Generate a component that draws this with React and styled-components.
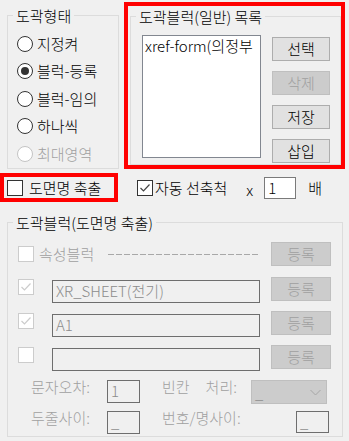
import React from "react";
import styled, { createGlobalStyle } from "styled-components";

const GlobalStyle = createGlobalStyle`
  html, body { margin: 0; padding: 0; background: #f0f0f0; }
  body {
    font-family: "Noto Sans CJK KR", "Noto Sans", sans-serif;
    font-size: 15px;
    font-weight: 300;
    color: #000;
  }
  * { box-sizing: border-box; }
`;

const Page = styled.div`
  width: 349px;
  height: 441px;
  overflow: hidden;
  display: flex;
  flex-direction: column;
`;

const TopRow = styled.div`
  display: flex;
  align-items: flex-start;
  padding-top: 2px;
`;

const Group = styled.div`
  display: flex;
  flex-direction: column;
  border: 1px solid #dcdcdc;
  flex: none;
`;

const ShapeGroup = styled(Group)`
  margin: 13px 0 0 7px;
  width: 112px;
  height: 154px;
`;

const ListGroup = styled(Group)`
  margin: 10px 0 0 2px;
  width: 211px;
  height: 149px;
`;

const BlockGroup = styled(Group)`
  margin: 20px 0 0 7px;
  width: 336px;
  height: 215px;
`;

const Title = styled.div`
  align-self: flex-start;
  margin: -9px 0 0 5px;
  padding: 0 3px;
  height: 18px;
  line-height: 18px;
  background: #f0f0f0;
  white-space: nowrap;
`;

const RadioList = styled.div`
  display: flex;
  flex-direction: column;
  padding: 5px 0 0 9px;
`;

const RadioRow = styled.label`
  display: flex;
  align-items: center;
  gap: 4px;
  height: 27.5px;
  line-height: 18px;
  white-space: nowrap;
  color: ${(p) => (p.$disabled ? "#a0a0a0" : "#000")};
`;

const RadioCircle = styled.span`
  flex: none;
  width: 16px;
  height: 16px;
  border-radius: 50%;
  border: 1px solid ${(p) => (p.$disabled ? "#c4c4c4" : "#333")};
  background: #fff;
  display: flex;
  align-items: center;
  justify-content: center;
  &::after {
    content: "";
    width: 8px;
    height: 8px;
    border-radius: 50%;
    background: #333;
    display: ${(p) => (p.$checked ? "block" : "none")};
  }
`;

const RedFrame = styled.div`
  flex: none;
  border: 4px solid #ff0000;
  margin-left: 5px;
  width: 221px;
  height: 167px;
  display: flex;
  align-items: flex-start;
`;

const ListBody = styled.div`
  display: flex;
  align-items: flex-start;
  gap: 11px;
  padding: 9px 0 0 11px;
`;

const ListBox = styled.div`
  width: 119px;
  height: 123px;
  border: 1px solid #828790;
  background: #fff;
  padding: 1px 2px;
  line-height: 18px;
  white-space: nowrap;
  overflow: hidden;
`;

const ButtonCol = styled.div`
  display: flex;
  flex-direction: column;
  gap: 10px;
  margin-top: 2px;
`;

const Button = styled.button`
  flex: none;
  width: ${(p) => p.$w || 58}px;
  height: 24px;
  padding: 0;
  margin: 0;
  font: inherit;
  line-height: 20px;
  background: ${(p) => (p.disabled ? "#cccccc" : "#e1e1e1")};
  border: 1px solid ${(p) => (p.disabled ? "#bfbfbf" : "#adadad")};
  color: ${(p) => (p.disabled ? "#a0a0a0" : "#000")};
  border-radius: 0;
`;

const OptionRow = styled.div`
  display: flex;
  align-items: center;
  margin-top: 4px;
  height: 29px;
  line-height: 18px;
  white-space: nowrap;
`;

const RedCheckFrame = styled.div`
  flex: none;
  width: 118px;
  height: 29px;
  border: 4px solid #ff0000;
  display: flex;
  align-items: center;
  padding-left: 3px;
`;

const CheckLabel = styled.label`
  display: flex;
  align-items: center;
  gap: ${(p) => p.$gap ?? 6}px;
  margin-left: ${(p) => p.$ml ?? 0}px;
  color: ${(p) => (p.$disabled ? "#a0a0a0" : "#000")};
  white-space: nowrap;
  line-height: 18px;
`;

const Box = styled.span`
  flex: none;
  width: 16px;
  height: 16px;
  border: 1px solid ${(p) => (p.$disabled ? "#cccccc" : "#333")};
  background: #fff;
  display: flex;
  align-items: center;
  justify-content: center;
`;

const Times = styled.span`
  margin: 4px 0 0 19px;
`;

const SmallInput = styled.div`
  flex: none;
  width: ${(p) => p.$w || 32}px;
  height: ${(p) => p.$h || 22}px;
  margin-left: ${(p) => p.$ml ?? 0}px;
  border: 1px solid ${(p) => (p.$disabled ? "#6e6e6e" : "#7a7a7a")};
  background: ${(p) => (p.$disabled ? "#f0f0f0" : "#fff")};
  color: ${(p) => (p.$disabled ? "#8c8c8c" : "#000")};
  padding-left: 3px;
  line-height: 19px;
  white-space: nowrap;
  overflow: hidden;
`;

const Unit = styled.span`
  margin-left: 12px;
`;

const BlockRows = styled.div`
  display: flex;
  flex-direction: column;
  gap: 8px;
  padding: 10px 11px 0 10px;
`;

const AttrRow = styled.div`
  display: flex;
  align-items: center;
  height: 24px;
  margin-bottom: 3px;
`;

const Dashes = styled.div`
  flex: 1;
  height: 1px;
  margin: 0 11px 0 14px;
  background: repeating-linear-gradient(
    to right,
    #a8a8a8 0 6px,
    transparent 6px 8px
  );
`;

const EntryRow = styled.div`
  display: flex;
  align-items: flex-start;
  height: 26px;
`;

const EntryCheck = styled.div`
  margin-top: 2px;
  flex: none;
`;

const EntryInput = styled(SmallInput)`
  align-self: flex-end;
`;

const EntryButton = styled(Button)`
  margin-left: 11px;
`;

const FormRows = styled.div`
  display: flex;
  flex-direction: column;
  gap: 7px;
  padding: 9px 0 0 23px;
`;

const FormRow = styled.div`
  display: flex;
  align-items: flex-start;
  height: 24px;
`;

const FieldLabel = styled.span`
  flex: none;
  width: ${(p) => p.$w}px;
  margin-left: ${(p) => p.$ml ?? 0}px;
  margin-top: -2px;
  line-height: 18px;
  color: #a0a0a0;
  white-space: nowrap;
`;

const WordGap = styled.span`
  display: inline-block;
  width: 16px;
`;

const Select = styled.div`
  flex: none;
  width: 76px;
  height: 24px;
  background: #cccccc;
  border: 1px solid #bfbfbf;
  color: #8c8c8c;
  display: flex;
  align-items: center;
  justify-content: space-between;
  padding: 0 5px 0 3px;
  line-height: 19px;
`;

const Check = ({ color = "#333" }) => (
  <svg width="12" height="12" viewBox="0 0 12 12">
    <polyline
      points="1.5,6 4.5,9 10.5,2.5"
      fill="none"
      stroke={color}
      strokeWidth="1.2"
    />
  </svg>
);

const Chevron = () => (
  <svg width="11" height="7" viewBox="0 0 11 7">
    <polyline points="0.5,1 5.5,6 10.5,1" fill="none" stroke="#a6a6a6" strokeWidth="1" />
  </svg>
);

const radios = [
  { label: "지정켜" },
  { label: "블럭-등록", checked: true },
  { label: "블럭-임의" },
  { label: "하나씩" },
  { label: "최대영역", disabled: true },
];

const entries = [
  { checked: true, value: "XR_SHEET(전기)" },
  { checked: true, value: "A1" },
  { checked: false, value: "" },
];

export default function App() {
  return (
    <>
      <GlobalStyle />
      <Page>
        <TopRow>
          <ShapeGroup>
            <Title>도곽형태</Title>
            <RadioList>
              {radios.map((r) => (
                <RadioRow key={r.label} $disabled={r.disabled}>
                  <RadioCircle $checked={r.checked} $disabled={r.disabled} />
                  {r.label}
                </RadioRow>
              ))}
            </RadioList>
          </ShapeGroup>
          <RedFrame>
            <ListGroup>
              <Title>도곽블럭(일반) 목록</Title>
              <ListBody>
                <ListBox>xref-form(의정부</ListBox>
                <ButtonCol>
                  <Button>선택</Button>
                  <Button disabled>삭제</Button>
                  <Button>저장</Button>
                  <Button>삽입</Button>
                </ButtonCol>
              </ListBody>
            </ListGroup>
          </RedFrame>
        </TopRow>

        <OptionRow>
          <RedCheckFrame>
            <CheckLabel>
              <Box />
              도면명 축출
            </CheckLabel>
          </RedCheckFrame>
          <CheckLabel $ml={19} $gap={2}>
            <Box>
              <Check color="#444" />
            </Box>
            자동 선축척
          </CheckLabel>
          <Times>x</Times>
          <SmallInput $ml={11}>1</SmallInput>
          <Unit>배</Unit>
        </OptionRow>

        <BlockGroup>
          <Title>도곽블럭(도면명 축출)</Title>
          <BlockRows>
            <AttrRow>
              <CheckLabel $gap={5} $disabled>
                <Box $disabled />
                속성블럭
              </CheckLabel>
              <Dashes />
              <Button $w={60} disabled>
                등록
              </Button>
            </AttrRow>
            {entries.map((e, i) => (
              <EntryRow key={i}>
                <EntryCheck>
                  <Box $disabled>{e.checked && <Check color="#cccccc" />}</Box>
                </EntryCheck>
                <EntryInput $disabled $w={208} $h={23} $ml={18}>
                  {e.value}
                </EntryInput>
                <EntryButton $w={60} disabled>
                  등록
                </EntryButton>
              </EntryRow>
            ))}
          </BlockRows>
          <FormRows>
            <FormRow>
              <FieldLabel $w={76}>문자오차:</FieldLabel>
              <SmallInput $disabled $w={33} $h={23}>1</SmallInput>
              <FieldLabel $w={89} $ml={22}>
                빈칸<WordGap />처리:
              </FieldLabel>
              <Select>
                <span>_</span>
                <Chevron />
              </Select>
            </FormRow>
            <FormRow>
              <FieldLabel $w={76}>두줄사이:</FieldLabel>
              <SmallInput $disabled $w={33} $h={23}>_</SmallInput>
              <FieldLabel $w={134} $ml={22}>번호/명사이:</FieldLabel>
              <SmallInput $disabled $w={33} $h={22}>_</SmallInput>
            </FormRow>
          </FormRows>
        </BlockGroup>
      </Page>
    </>
  );
}
